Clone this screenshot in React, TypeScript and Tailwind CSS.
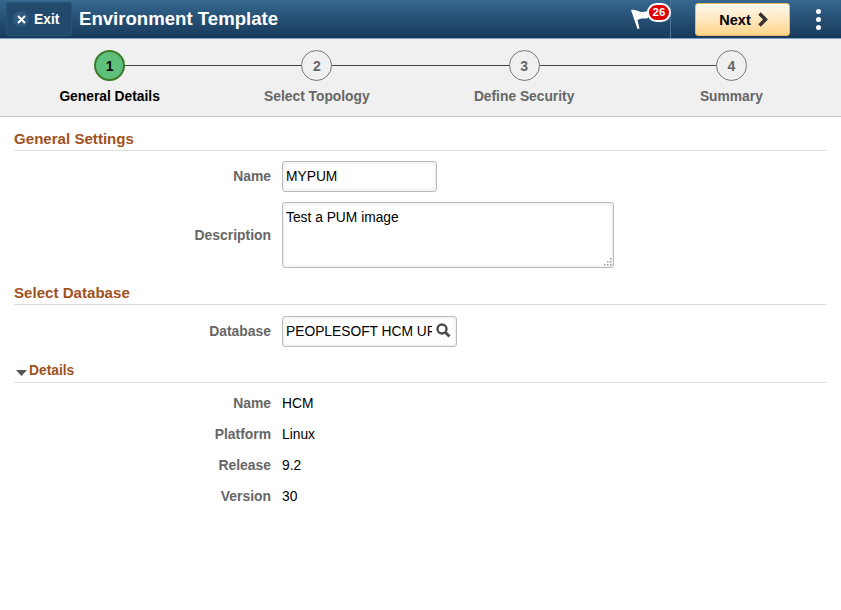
import React from "react";

const steps = ["General Details", "Select Topology", "Define Security", "Summary"];

const details = [
  ["Name", "HCM"],
  ["Platform", "Linux"],
  ["Release", "9.2"],
  ["Version", "30"],
];

// Top banner
function Banner() {
  return (
    <div className="flex h-[39px] items-center border-b border-[#7fa3c7] bg-gradient-to-b from-[#36678f] to-[#173a5a] pl-[6px] pr-[20px]">
      <div className="flex h-[34px] w-[66px] items-center gap-[5px] rounded-[3px] border border-[#2a5273] bg-[#214a6c] pl-[6px]">
        <div className="flex h-[16px] w-[16px] items-center justify-center rounded-full bg-[#2f5a80]">
          <svg width="9" height="9" viewBox="0 0 9 9">
            <path d="M1 1l7 7M8 1l-7 7" stroke="#fff" strokeWidth="2" />
          </svg>
        </div>
        <span className="pt-[3px] text-[13.800px] font-bold text-white">Exit</span>
      </div>
      <div className="ml-[7px] text-[18.600px] font-bold text-white">Environment Template</div>
      <div className="flex-1" />
      <div className="relative h-[38px] w-[41px] border-r border-[#4b7396]">
        <svg className="absolute left-[0px] top-[8px]" width="24" height="22" viewBox="0 0 24 22">
          <path d="M1 2C5 1 8 4 12 4c3 0 5-1 7-2l-1 8c-3 1-6 0-8 1l-2.500 1 2 8.500-2 .5z" fill="#fff" />
        </svg>
        <div className="absolute left-[17px] top-[3px] flex h-[19px] w-[24px] items-center justify-center rounded-full border-2 border-white bg-[#e00000] text-[11.500px] font-bold text-white">
          26
        </div>
      </div>
      <div className="ml-[24px] flex h-[33px] w-[95px] items-center justify-center gap-[6px] rounded-[3px] border border-[#e8b860] bg-gradient-to-b from-[#fffaf0] to-[#ffd48a] pl-[3px] text-[14.500px] font-bold text-black">
        <span className="pt-[3px]">Next</span>
        <svg className="mt-[1px]" width="12" height="15" viewBox="0 0 12 15">
          <path d="M2.500 1.500l6 6-6 6" fill="none" stroke="#333" strokeWidth="3.400" />
        </svg>
      </div>
      <div className="ml-[26px] flex flex-col gap-[3px]">
        <div className="h-[5px] w-[5px] rounded-full bg-white" />
        <div className="h-[5px] w-[5px] rounded-full bg-white" />
        <div className="h-[5px] w-[5px] rounded-full bg-white" />
      </div>
    </div>
  );
}

// Step train
function Train() {
  return (
    <div className="relative h-[78px] border-b border-[#cccccc] bg-[#f0f0f0] px-[6px]">
      <div className="absolute left-[109px] top-[26px] h-[1px] w-[622px] bg-[#444444]" />
      <div className="relative grid grid-cols-4">
        {steps.map((step, i) => (
          <div key={step} className="flex flex-col items-center pt-[11px]">
            <div
              className={
                i === 0
                  ? "flex h-[31px] w-[31px] items-center justify-center rounded-full border-2 border-[#3d7a2a] bg-[#5fc07c] pt-[1px] text-[14px] font-bold text-black"
                  : "flex h-[31px] w-[31px] items-center justify-center rounded-full border border-[#777777] bg-[#f0f0f0] pt-[1px] text-[14px] font-bold text-[#666666]"
              }
            >
              {i + 1}
            </div>
            <div className={i === 0 ? "mt-[6px] text-[13.800px] font-bold text-black" : "mt-[6px] text-[13.800px] font-bold text-[#666666]"}>
              {step}
            </div>
          </div>
        ))}
      </div>
    </div>
  );
}

function SectionTitle({ title }: { title: string }) {
  return (
    <div className="border-b border-[#dddddd] pb-[2px] text-[15.100px] font-bold leading-[18px] text-[#a0521c]">{title}</div>
  );
}

function Label({ text }: { text: string }) {
  return <div className="w-[257px] text-right text-[13.900px] font-bold text-[#666666]">{text}</div>;
}

const App: React.FC = () => {
  return (
    <div className="h-[610px] w-[841px] overflow-hidden bg-white font-['Liberation_Sans',Arial,sans-serif]">
      <Banner />
      <Train />
      <div className="px-[14px] pt-[13px]">
        {/* General Settings */}
        <SectionTitle title="General Settings" />
        <div className="mt-[10px] flex items-center gap-[11px]">
          <Label text="Name" />
          <input
            readOnly
            value="MYPUM"
            className="h-[31px] w-[155px] rounded-[3px] border border-[#bbbbbb] px-[3px] text-[13.800px] text-black shadow-[inset_0_0_4px_rgba(0,0,0,0.12)] outline-none"
          />
        </div>
        <div className="mt-[10px] flex items-center gap-[11px]">
          <Label text="Description" />
          <div className="relative flex">
            <textarea
              readOnly
              value="Test a PUM image"
              className="h-[66px] w-[332px] resize-none rounded-[3px] border border-[#bbbbbb] px-[3px] py-[7px] text-[13.800px] leading-[16px] text-black shadow-[inset_0_0_4px_rgba(0,0,0,0.12)] outline-none"
            />
            {/* resize grip */}
            <svg className="absolute bottom-[2px] right-[2px]" width="8" height="8" viewBox="0 0 8 8">
              <path d="M6 0h1.500v1.500H6zM3 3h1.500v1.500H3zM6 3h1.500v1.500H6zM0 6h1.500v1.500H0zM3 6h1.500v1.500H3zM6 6h1.500v1.500H6z" fill="#999999" />
            </svg>
          </div>
        </div>

        {/* Select Database */}
        <div className="mt-[16px]">
          <SectionTitle title="Select Database" />
        </div>
        <div className="mt-[11px] flex items-center gap-[11px]">
          <Label text="Database" />
          <div className="flex h-[31px] w-[175px] items-center rounded-[3px] border border-[#bbbbbb] pl-[3px] shadow-[inset_0_0_4px_rgba(0,0,0,0.12)]">
            <input
              readOnly
              value="PEOPLESOFT HCM UPDATE"
              className="mt-[1px] w-[146px] text-[13.800px] text-black outline-none"
            />
            <svg className="ml-[4px] mt-[-2px]" width="15" height="15" viewBox="0 0 15 15">
              <circle cx="6" cy="6" r="4.500" fill="none" stroke="#4d4d4d" strokeWidth="2.400" />
              <path d="M9.500 9.500l4 4" stroke="#4d4d4d" strokeWidth="3" />
            </svg>
          </div>
        </div>

        {/* Details */}
        <div className="mt-[15px] flex items-center gap-[2px] border-b border-[#dddddd] pb-[2px] text-[13.800px] font-bold leading-[18px] text-[#a0521c]">
          <svg className="ml-[2px] mt-[3px]" width="11" height="6" viewBox="0 0 11 6">
            <path d="M0 0h11L5.500 6z" fill="#555555" />
          </svg>
          Details
        </div>
        <div className="mt-[5px] flex flex-col">
          {details.map(([label, value]) => (
            <div key={label} className="flex h-[31px] items-center gap-[11px]">
              <Label text={label} />
              <div className="pt-[1px] text-[13.800px] text-black">{value}</div>
            </div>
          ))}
        </div>
      </div>
    </div>
  );
};

export default App;
